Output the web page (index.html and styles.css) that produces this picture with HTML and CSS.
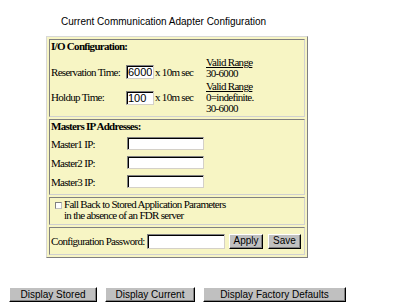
FILE: index.html
```html
<!DOCTYPE html>
<html>
<head>
<meta charset="utf-8">
<link rel="stylesheet" href="styles.css">
</head>
<body>
<div class="title">Current Communication Adapter Configuration</div>
<div class="panel">
  <section class="cell io">
    <div class="hdr">I/O Configuration:</div>
    <div class="iogrid">
      <span class="lbl">Reservation Time:</span>
      <span class="unit"><input class="field num" value="6000"> x 10m sec</span>
      <span class="range"><u>Valid Range</u><br>30-6000</span>
      <span class="lbl mid">Holdup Time:</span>
      <span class="unit mid"><input class="field num" value="100"> x 10m sec</span>
      <span class="range mid"><u>Valid Range</u><br>0=indefinite.<br>30-6000</span>
    </div>
  </section>
  <section class="cell masters">
    <div class="hdr">Masters IP Addresses:</div>
    <div class="ipgrid">
      <span>Master1 IP:</span><input class="field ip">
      <span>Master2 IP:</span><input class="field ip">
      <span>Master3 IP:</span><input class="field ip">
    </div>
  </section>
  <section class="cell fallback">
    <span class="check"></span>
    <span class="ftext">Fall Back to Stored Application Parameters<br>in the absence of an FDR server</span>
  </section>
  <section class="cell pwd">
    <span class="plbl">Configuration Password:</span>
    <input class="field pass" type="password">
    <button class="btn apply">Apply</button>
    <button class="btn save">Save</button>
  </section>
</div>
<div class="actions">
  <button class="btn big b1">Display Stored</button>
  <button class="btn big b2">Display Current</button>
  <button class="btn big b3">Display Factory Defaults</button>
</div>
</body>
</html>
```
FILE: styles.css
```css
body {
  margin: 0;
  background: #fff;
  color: #000;
  font-family: "Liberation Serif", "Times New Roman", serif;
  font-size: 11px;
  letter-spacing: -0.7px;
}
.title {
  font-family: "Liberation Sans", Arial, sans-serif;
  font-size: 10px;
  letter-spacing: 0;
  line-height: 12px;
  padding: 16px 0 0 61px;
  height: 20px;
}
.panel {
  margin-left: 46px;
  width: 262px;
  box-sizing: border-box;
  background: #f7f5c4;
  border: 1px solid;
  border-color: #d8d8d8 #808080 #808080 #d8d8d8;
  padding: 2px;
  display: flex;
  flex-direction: column;
  gap: 2px;
}
.cell {
  box-sizing: border-box;
  border: 1px solid;
  border-color: #808080 #d0d0d0 #d0d0d0 #808080;
  padding-left: 1px;
}
.hdr {
  font-weight: bold;
  line-height: 12px;
}
.io { height: 78px; }
.iogrid {
  display: grid;
  grid-template-columns: 75px 80px 1fr;
  grid-template-rows: 27px 37px;
  align-items: end;
}
.mid { align-self: center; }
.lbl { line-height: 13px; }
.unit {
  display: flex;
  align-items: center;
  gap: 1px;
  line-height: 13px;
}
.range { line-height: 11px; }
.range u { text-decoration: underline; }
.field {
  box-sizing: border-box;
  margin: 0;
  padding: 0 1px;
  background: #fff;
  border: 1px solid;
  border-color: #808080 #d4d0c8 #d4d0c8 #808080;
  box-shadow: inset 1px 1px 0 #000;
  font-family: "Liberation Sans", Arial, sans-serif;
  font-size: 11px;
  letter-spacing: 0;
  color: #000;
  outline: none;
}
.num { width: 28px; height: 14px; }
.masters { height: 76px; }
.ipgrid {
  display: grid;
  grid-template-columns: 76px auto;
  grid-auto-rows: 19px;
  align-items: center;
  justify-items: start;
  padding-top: 2px;
}
.ip { width: 77px; height: 13px; }
.fallback {
  height: 28px;
  display: flex;
  align-items: flex-start;
  padding-top: 1px;
}
.check {
  width: 7px;
  height: 7px;
  box-sizing: border-box;
  margin: 3px 2px 0 4px;
  background: #fff;
  border: 1px solid;
  border-color: #808080 #c0c0c0 #c0c0c0 #808080;
}
.ftext { line-height: 11px; }
.pwd {
  height: 28px;
  display: flex;
  align-items: center;
}
.plbl { width: 96px; }
.pass { width: 78px; height: 15px; }
.btn {
  box-sizing: border-box;
  margin: 0;
  padding: 0;
  background: #c0c0c0;
  border: 1px solid;
  border-color: #fff #000 #000 #fff;
  box-shadow: inset -1px -1px 0 #808080;
  font-family: "Liberation Sans", Arial, sans-serif;
  font-size: 10px;
  letter-spacing: 0;
  color: #000;
  height: 15px;
  line-height: 12px;
}
.apply { width: 34px; margin-left: 4px; }
.save { width: 33px; margin-left: 5px; }
.actions {
  display: flex;
  gap: 8px;
  padding-left: 9px;
  margin-top: 29px;
}
.b1 { width: 88px; }
.b2 { width: 90px; }
.b3 { width: 143px; }
```
